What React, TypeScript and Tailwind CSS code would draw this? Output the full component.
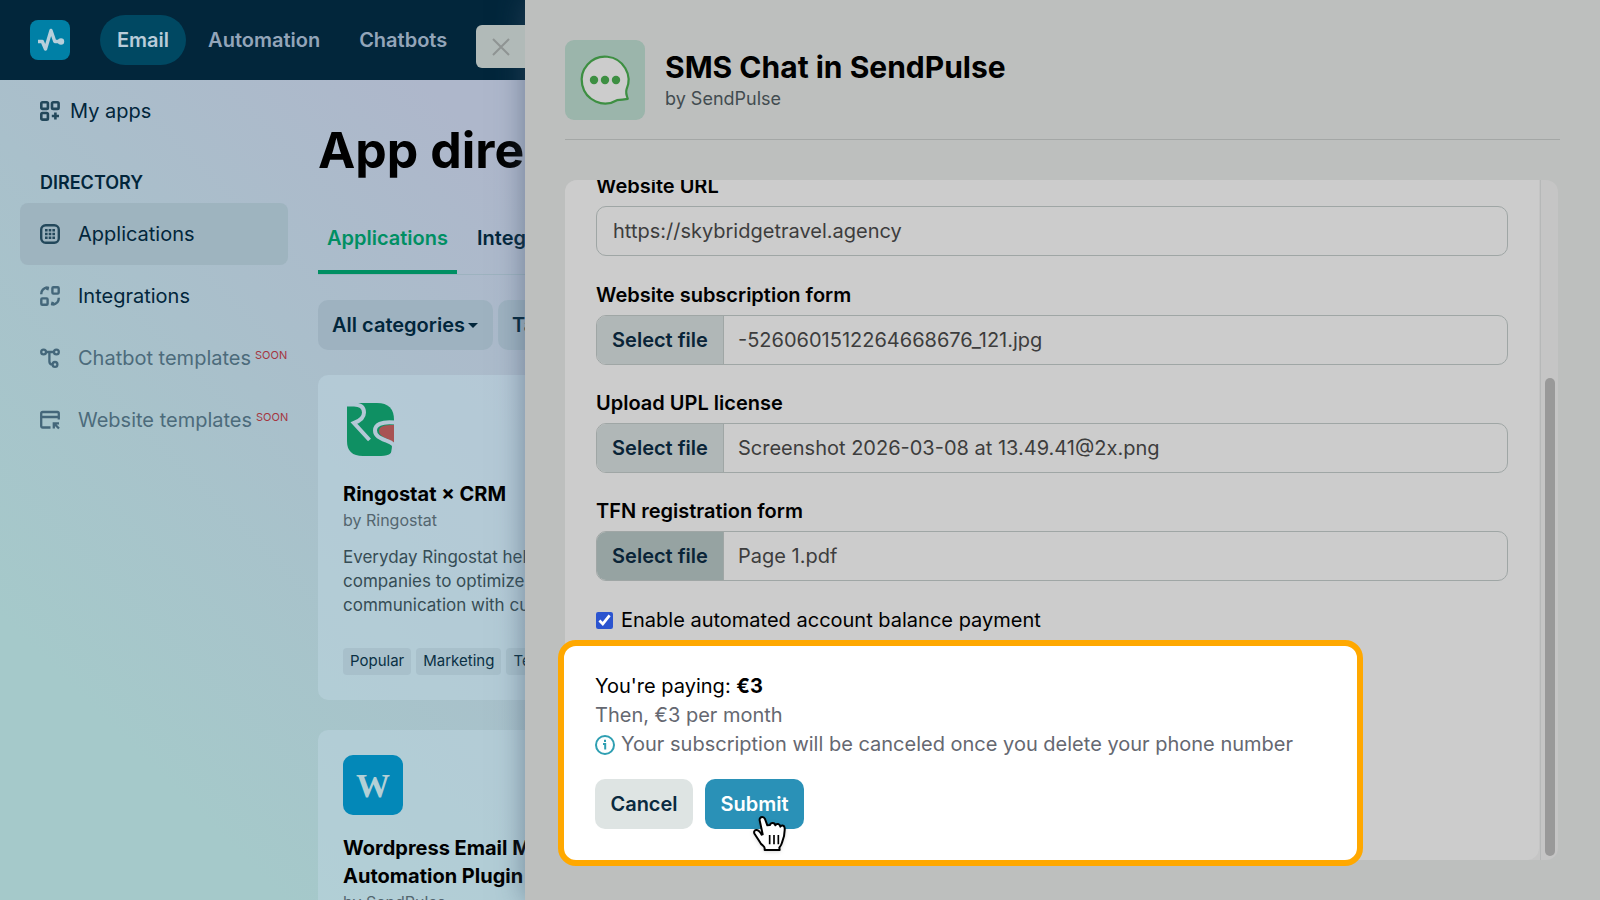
import { useState } from "react";
import type { ReactNode } from "react";

const navLinks = ["Email", "Automation", "Chatbots"];

const AppsIcon = () => (
  <svg width="20" height="20" viewBox="0 0 20 20" fill="none" stroke="currentColor" strokeWidth="2.6" strokeLinejoin="round">
    <rect x="1.3" y="1.3" width="6.6" height="6.6" rx="1.2" />
    <rect x="12" y="1.3" width="6.6" height="6.6" rx="1.2" />
    <rect x="1.3" y="12" width="6.6" height="6.6" rx="1.2" />
    <path d="M15.4 11.4v7.2M11.8 15h7.2" />
  </svg>
);

const GridIcon = () => (
  <svg width="20" height="20" viewBox="0 0 20 20" fill="none" stroke="currentColor">
    <rect x="1.2" y="1.2" width="17.6" height="17.6" rx="4.5" strokeWidth="2.4" />
    <path d="M5 6.3h10M5 10h10M5 13.7h10" strokeWidth="2.4" strokeDasharray="2.6 1.1" />
  </svg>
);

const IntegrationsIcon = () => (
  <svg width="20" height="20" viewBox="0 0 20 20" fill="none" stroke="currentColor" strokeWidth="2.4" strokeLinejoin="round">
    <rect x="12.4" y="1.3" width="6.3" height="6.3" rx="1" />
    <rect x="1.3" y="12.4" width="6.3" height="6.3" rx="1" />
    <path d="M1.2 8.2C1.2 4.4 3.4 1.8 7.6 1.8M5.4 1.4l2.6 .2-.8 2.6M18.8 11.8c0 3.8-2.2 6.4-6.4 6.4M14.6 18.6l-2.6-.2.8-2.6" />
  </svg>
);

const FlowIcon = () => (
  <svg width="20" height="20" viewBox="0 0 20 20" fill="none" stroke="currentColor" strokeWidth="2.3">
    <circle cx="3.6" cy="4" r="2.4" />
    <circle cx="16.4" cy="4" r="2.4" />
    <circle cx="15" cy="16.4" r="2.4" />
    <path d="M6 4h8M9.4 4v9.4q0 3 3 3" />
  </svg>
);

const WindowIcon = () => (
  <svg width="20" height="20" viewBox="0 0 20 20" fill="none" stroke="currentColor" strokeWidth="2.3">
    <path d="M10.5 17.5H2.7Q1.2 17.5 1.2 16V3.5Q1.2 2 2.7 2h14.6Q18.8 2 18.8 3.5V9.5M1 7h18" />
    <path d="M19 18.5l-5-5M13.8 18.5v-5.2h5.2" />
  </svg>
);

const PulseLogo = () => (
  <svg width="40" height="40" viewBox="0 0 40 40">
    <rect width="40" height="40" rx="8" fill="#0080a6" />
    <path d="M8 21.5h4.3l3.2 7.5L21 10.5l3.8 11H30" fill="none" stroke="#b7cfdb" strokeWidth="3.4" strokeLinejoin="round" />
    <circle cx="31" cy="21.5" r="3.2" fill="#b7cfdb" />
  </svg>
);

const RingostatLogo = () => (
  <svg width="60" height="60" viewBox="0 0 60 60">
    <path d="M4 3h30q17 0 17 17v25q0 11-13 11H20Q4 56 4 41z" fill="#0f9063" />
    <path d="M51 25c-10 0-15 1-15 6s6 6 15 12z" fill="#a85353" />
    <path d="M3 4.500h8c7 0 10 3 10 8s-3 8-10 10.500L26.500 40" fill="none" stroke="#b4c8d6" strokeWidth="4" />
    <path d="M52 22.500C38 21 32 25 32 30.500S37 38 43 40.500s8 3 10 9" fill="none" stroke="#b4c8d6" strokeWidth="4" />
    <path d="M3 2h10l-2 2.500H3zM49 45l3-4v16h-6q3-5 3-12z" fill="#b4c8d6" />
  </svg>
);

const ChatLogo = () => (
  <svg width="80" height="80" viewBox="0 0 80 80" className="shrink-0">
    <rect width="80" height="80" rx="9" fill="#9bb5ab" />
    <path
      d="M52 60.2A23.4 23.4 0 1 1 61.5 49.5Q60.5 53 62.8 58.8Q57.5 59.800 52 60.2z"
      fill="#cccccc"
      stroke="#3d8f42"
      strokeWidth="2.2"
      strokeLinejoin="round"
    />
    <g fill="#3d8f42">
      <circle cx="29" cy="40" r="4.2" />
      <circle cx="40" cy="40" r="4.2" />
      <circle cx="51" cy="40" r="4.2" />
    </g>
  </svg>
);

const HandCursor = () => (
  <svg width="36" height="38" viewBox="0 0 108 114" className="pointer-events-none absolute left-[47px] top-9 drop-shadow">
    <path
      d="M31 6c-6 0-9 5-8 10l9 42-3 1c-4-7-9-15-17-14-6 1-7 7-4 12 8 12 13 20 18 28 4 6 12 9 12 15v5h45l-1-7c3-4 7-10 8-15 5-13 9-29 8-44-1-9-10-10-13-4-1-9-12-11-15-4-2-9-14-9-16-1L46 31 39 12c-2-4-4-6-8-6z"
      fill="#fff"
      stroke="#000"
      strokeWidth="6"
      strokeLinejoin="round"
    />
    <path d="M53 60v28M66 60v28M79 60v28" stroke="#000" strokeWidth="5" />
  </svg>
);

type SideItemProps = { icon: ReactNode; label: string; active?: boolean; soon?: boolean };

const SideItem = ({ icon, label, active, soon }: SideItemProps) => (
  <a
    href="#"
    className={`flex h-[62px] items-center gap-[18px] whitespace-nowrap rounded-lg pl-5 text-[20px] ${
      active ? "bg-[#9cb3be]/90" : ""
    } ${soon ? "text-[#4c6b7b]" : "text-[#02263b]"}`}
  >
    <span className={active ? "text-[#23485b]" : "text-[#44677a]"}>{icon}</span>
    <span className="flex items-start gap-1">
      {label}
      {soon && <span className="text-[11px] leading-6 text-[#a5363f]">SOON</span>}
    </span>
  </a>
);

const Tag = ({ children }: { children: ReactNode }) => (
  <span className="flex h-[27px] items-center rounded bg-[#a5bdc8]/80 px-[7px] text-[15px] text-[#0a3044]">{children}</span>
);

type FileFieldProps = { id: string; label: string; value: string; hovered?: boolean };

const FileField = ({ id, label, value, hovered }: FileFieldProps) => (
  <div>
    <label htmlFor={id} className="mb-[6px] block text-[20px] font-semibold leading-7">
      {label}
    </label>
    <div className="flex h-[50px] overflow-hidden rounded-[10px] border border-[#9fa6a5]">
      <button
        type="button"
        className={`w-[127px] shrink-0 border-r border-[#9fa6a5] text-[20px] font-semibold text-[#0a2437] ${
          hovered ? "bg-[#96a3a2]" : "bg-[#b0b7b7]"
        }`}
      >
        Select file
      </button>
      <input id={id} readOnly value={value} className="min-w-0 flex-1 bg-transparent px-[14px] text-[20px] text-[#3d3d3d] outline-none" />
    </div>
  </div>
);

const App = () => {
  const [autoPay, setAutoPay] = useState(true);
  const [url, setUrl] = useState("https://skybridgetravel.agency");

  return (
    <div className="relative h-screen overflow-hidden bg-[linear-gradient(45deg,#a5c9ca_200px,#a9c0cb_540px,#aeb7cb_880px)] font-['Inter','Liberation_Sans',sans-serif] text-black">
      {/* Top bar */}
      <header className="flex h-20 items-center bg-[#02263b] pl-[30px]">
        <a href="#" aria-label="Home">
          <PulseLogo />
        </a>
        <nav className="ml-[30px] flex gap-[5px]">
          {navLinks.map((link, i) => (
            <a
              key={link}
              href="#"
              className={`flex h-[50px] items-center rounded-full px-[17px] text-[20px] font-semibold ${
                i === 0 ? "bg-[#004862] text-[#b9ccd9]" : "text-[#93a5b9]"
              }`}
            >
              {link}
            </a>
          ))}
        </nav>
      </header>

      <div className="flex">
        {/* Sidebar */}
        <aside className="w-[318px] shrink-0 pl-5 pr-[30px] pt-4">
          <a href="#" className="flex h-[30px] items-center gap-[10px] pl-5 text-[20px] text-[#02263b]">
            <span className="text-[#23485b]">
              <AppsIcon />
            </span>
            My apps
          </a>
          <h2 className="mb-[6px] mt-[43px] pl-5 text-[18px] font-semibold leading-7 text-[#02263b]">DIRECTORY</h2>
          <SideItem icon={<GridIcon />} label="Applications" active />
          <SideItem icon={<IntegrationsIcon />} label="Integrations" />
          <SideItem icon={<FlowIcon />} label="Chatbot templates" soon />
          <SideItem icon={<WindowIcon />} label="Website templates" soon />
        </aside>

        {/* App directory */}
        <main className="min-w-0 flex-1 pt-10">
          <h1 className="text-[50px] font-bold leading-[60px]">App directory</h1>
          <div className="mt-5 flex border-b border-[#9db2bf] text-[20px] font-semibold">
            <a href="#" className="h-[74px] border-b-4 border-[#008f63] px-[9px] pt-[23px] leading-[30px] text-[#008f63]">
              Applications
            </a>
            <a href="#" className="px-5 pt-[23px] leading-[30px] text-[#02263b]">
              Integrations
            </a>
          </div>

          <div className="mt-[25px] flex gap-[5px] text-[20px] font-semibold text-[#02263b]">
            <div className="relative">
              <select aria-label="Category" className="h-[50px] w-[175px] appearance-none rounded-[10px] bg-[#9eb2c0] pl-[14px]">
                <option>All categories</option>
              </select>
              <span className="pointer-events-none absolute right-[15px] top-[23px] border-x-[5px] border-t-[5px] border-x-transparent border-t-[#02263b]"></span>
            </div>
            <select aria-label="Tasks" className="h-[50px] w-[120px] appearance-none rounded-[10px] bg-[#9eb2c0] pl-[14px]">
              <option>Tasks</option>
            </select>
          </div>

          <div className="mt-[25px] flex w-[400px] flex-col gap-[30px]">
            <article className="rounded-[10px] bg-[#bed6e1]/50 px-[25px] pb-[25px] pt-[25px]">
              <RingostatLogo />
              <h3 className="mt-5 text-[20px] font-bold leading-7">Ringostat × CRM</h3>
              <p className="text-[16px] leading-6 text-[#53666f]">by Ringostat</p>
              <p className="mb-[31px] mt-[13px] whitespace-nowrap text-[17px] leading-6 text-[#364d55]">
                Everyday Ringostat helps
                <br />
                companies to optimize their
                <br />
                communication with customers
              </p>
              <div className="flex gap-[5px]">
                <Tag>Popular</Tag>
                <Tag>Marketing</Tag>
                <Tag>Telephony</Tag>
              </div>
            </article>

            <article className="rounded-[10px] bg-[#bed6e1]/50 px-[25px] pb-[25px] pt-[25px]">
              <div className="flex h-[60px] w-[60px] items-center justify-center rounded-[10px] bg-[#0388b8] font-['Liberation_Serif',serif] text-[34px] font-bold text-[#b3d0d6]">
                W
              </div>
              <h3 className="mt-[19px] whitespace-nowrap text-[20px] font-bold leading-7">
                Wordpress Email Marketing
                <br />
                Automation Plugin
              </h3>
              <p className="text-[16px] leading-6 text-[#53666f]">by SendPulse</p>
            </article>
          </div>
        </main>
      </div>

      {/* Drawer */}
      <section className="absolute inset-y-0 left-[525px] right-0 bg-[#bdbfbe] pl-10 pr-10 pt-10 shadow-[0_0_28px_0_rgba(60,80,105,0.55)]">
        <button
          type="button"
          aria-label="Close"
          className="absolute right-full top-[25px] flex h-[43px] w-[49px] items-center justify-center rounded-l-md bg-[#b1bab8] text-[#8f9493]"
        >
          <svg width="18" height="18" viewBox="0 0 18 18" stroke="currentColor" strokeWidth="2">
            <path d="M1 1l16 16M17 1L1 17" />
          </svg>
        </button>

        <div className="flex gap-5 border-b border-[#a4a7a6] pb-[19px]">
          <ChatLogo />
          <div className="pt-[9px]">
            <h2 className="text-[30px] font-bold leading-9">SMS Chat in SendPulse</h2>
            <p className="text-[18px] leading-7 text-[#424c50]">by SendPulse</p>
          </div>
        </div>

        <div className="mr-[2px] mt-10 flex rounded-xl bg-[#c5c5c5]">
          <form onSubmit={(e) => e.preventDefault()} className="min-w-0 flex-1 rounded-xl rounded-tr-none bg-[#cccccc] px-[31px]">
            <label htmlFor="url" className="flex h-[26px] items-start overflow-hidden text-[20px] font-semibold leading-[12px]">
              Website URL
            </label>
            <input
              id="url"
              value={url}
              onChange={(e) => setUrl(e.target.value)}
              className="block h-[50px] w-full rounded-[10px] border border-[#9fa6a5] bg-transparent px-4 text-[20px] text-[#3d3d3d]"
            />

            <div className="mt-[25px] flex flex-col gap-6">
              <FileField id="subscription" label="Website subscription form" value="-5260601512264668676_121.jpg" />
              <FileField id="license" label="Upload UPL license" value="Screenshot 2026-03-08 at 13.49.41@2x.png" />
              <FileField id="tfn" label="TFN registration form" value="Page 1.pdf" hovered />
            </div>

            <label className="mt-[25px] flex h-7 items-center gap-2 text-[20px]">
              <input
                type="checkbox"
                checked={autoPay}
                onChange={(e) => setAutoPay(e.target.checked)}
                className="h-[17px] w-[17px] accent-[#2b54cf]"
              />
              Enable automated account balance payment
            </label>

            {/* Highlighted summary */}
            <div className="relative -mb-[6px] -ml-[38px] mt-[6px] w-[805px] rounded-[18px] border-[6px] border-[#ffa800] bg-white pb-[31px] pl-[31px] pt-[26px] text-[20px]">
              <p className="leading-[29px]">
                You're paying: <b>€3</b>
              </p>
              <p className="leading-[29px] text-[#656871]">Then, €3 per month</p>
              <p className="flex items-center gap-[6px] whitespace-nowrap leading-[29px] text-[#656871]">
                <svg width="20" height="20" viewBox="0 0 20 20" fill="none" stroke="#2f9fb2" strokeWidth="2">
                  <circle cx="10" cy="10" r="9" />
                  <path d="M8 9h2.2v5.5M10 4.8v2.2" />
                </svg>
                Your subscription will be canceled once you delete your phone number
              </p>
              <div className="mt-5 flex gap-3 font-semibold">
                <button type="button" className="h-[50px] w-[98px] rounded-[10px] bg-[#dee4e3] text-[#0a2a3f]">
                  Cancel
                </button>
                <div className="relative">
                  <button type="submit" className="h-[50px] w-[99px] rounded-[10px] bg-[#2a91b7] text-white">
                    Submit
                  </button>
                  <HandCursor />
                </div>
              </div>
            </div>
          </form>

          {/* Scroll track */}
          <div className="ml-px flex w-[18px] items-end justify-center border-l border-[#b6b8b8] pb-1">
            <div className="h-[478px] w-[10px] rounded-full bg-[#999999]"></div>
          </div>
        </div>
      </section>
    </div>
  );
};

export default App;
